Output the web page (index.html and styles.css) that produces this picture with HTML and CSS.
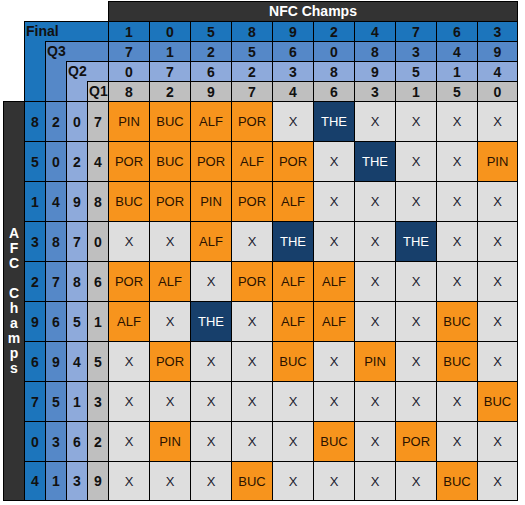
FILE: index.html
```html
<!DOCTYPE html>
<html lang="en">
<head>
    <meta charset="UTF-8">
    <meta name="viewport" content="width=device-width, initial-scale=1.0">
    <title>Squares</title>
    <link rel="stylesheet" href="styles.css">
</head>
<body>
    <div class="board" id="board">
        <div class="corner"></div>
        <div class="nfc">NFC Champs</div>
        <div class="side-gap"></div>
        <!-- quarter label steps, painted on top of each other -->
        <div class="layer final">Final</div>
        <div class="layer q3">Q3</div>
        <div class="layer q2">Q2</div>
        <div class="layer q1">Q1</div>
        <div class="afc"><div>A<br>F<br>C<br><br>C<br>h<br>a<br>m<br>p<br>s</div></div>
    </div>

    <script>
        const quarters = ['final', 'q3', 'q2', 'q1'];

        // NFC digits, one list per quarter
        const nfc = [
            [1, 0, 5, 8, 9, 2, 4, 7, 6, 3],
            [7, 1, 2, 5, 6, 0, 8, 3, 4, 9],
            [0, 7, 6, 2, 3, 8, 9, 5, 1, 4],
            [8, 2, 9, 7, 4, 6, 3, 1, 5, 0]
        ];

        // AFC digits (final, q3, q2, q1) and the squares of each row
        const rows = [
            [[8, 2, 0, 7], 'PIN BUC ALF POR X THE X X X X'],
            [[5, 0, 2, 4], 'POR BUC POR ALF POR X THE X X PIN'],
            [[1, 4, 9, 8], 'BUC POR PIN POR ALF X X X X X'],
            [[3, 8, 7, 0], 'X X ALF X THE X X THE X X'],
            [[2, 7, 8, 6], 'POR ALF X POR ALF ALF X X X X'],
            [[9, 6, 5, 1], 'ALF X THE X ALF ALF X X BUC X'],
            [[6, 9, 4, 5], 'X POR X X BUC X PIN X BUC X'],
            [[7, 5, 1, 3], 'X X X X X X X X X BUC'],
            [[0, 3, 6, 2], 'X PIN X X X BUC X POR X X'],
            [[4, 1, 3, 9], 'X X X BUC X X X X BUC X']
        ];

        const board = document.getElementById('board');

        function addCell(text, cls) {
            const div = document.createElement('div');
            div.className = 'cell ' + cls;
            div.textContent = text;
            board.appendChild(div);
        }

        nfc.forEach((digits, i) => {
            digits.forEach(d => addCell(d, 'num ' + quarters[i]));
        });

        rows.forEach(([digits, squares]) => {
            digits.forEach((d, i) => addCell(d, 'num ' + quarters[i]));
            squares.split(' ').forEach(name => {
                let cls = 'team';
                if (name === 'X') cls = 'open';
                if (name === 'THE') cls = 'the';
                addCell(name, 'square ' + cls);
            });
        });
    </script>
</body>
</html>
```

FILE: styles.css
```css
body {
    margin: 0;
    background-color: white;
    font-family: 'Liberation Sans', Arial, sans-serif;
}
.board {
    display: grid;
    grid-template-columns: repeat(5, 21px) repeat(9, 41px) 40px;
    grid-template-rows: repeat(5, 20px) repeat(9, 40px) 39px;
    width: max-content;
    margin: 1px 0 0 3px;
    border-right: 1px solid #000;
    border-bottom: 1px solid #000;
}
.corner {
    grid-column: 1 / 6;
    grid-row: 1 / 2;
}
.side-gap {
    grid-column: 1 / 2;
    grid-row: 2 / 6;
}
.nfc {
    grid-column: 6 / 16;
    grid-row: 1 / 2;
    background-color: #333333;
    color: white;
    font-weight: bold;
    font-size: 14px;
    text-align: center;
    line-height: 19px;
    border-left: 1px solid #000;
    border-top: 1px solid #000;
}
.layer {
    grid-row-end: 6;
    grid-column-end: 6;
    border-left: 1px solid #000;
    border-top: 1px solid #000;
    font-weight: bold;
    font-size: 14px;
    line-height: 19px;
    padding-left: 1px;
    color: #111;
}
.layer.final {
    grid-column-start: 2;
    grid-row-start: 2;
}
.layer.q3 {
    grid-column-start: 3;
    grid-row-start: 3;
}
.layer.q2 {
    grid-column-start: 4;
    grid-row-start: 4;
}
.layer.q1 {
    grid-column-start: 5;
    grid-row-start: 5;
}
.afc {
    grid-column: 1 / 2;
    grid-row: 6 / 16;
    background-color: #333333;
    border-left: 1px solid #000;
    border-top: 1px solid #000;
    color: white;
    font-weight: bold;
    font-size: 14px;
    line-height: 15px;
    text-align: center;
    display: flex;
    align-items: center;
    justify-content: center;
}
.cell {
    box-sizing: border-box;
    border-left: 1px solid #000;
    border-top: 1px solid #000;
    display: flex;
    align-items: center;
    justify-content: center;
}
.num {
    font-weight: bold;
    font-size: 14px;
    color: #111;
}
.final {
    background-color: #1c75bc;
}
.q3 {
    background-color: #5588c8;
}
.q2 {
    background-color: #8eaadb;
}
.q1 {
    background-color: #bfbfbf;
}
.square {
    font-size: 13px;
}
.square.open {
    background-color: #dedede;
    color: #1a1a2e;
}
.square.team {
    background-color: #f7941d;
    color: #2a1200;
}
.square.the {
    background-color: #173f6b;
    color: white;
}
```
